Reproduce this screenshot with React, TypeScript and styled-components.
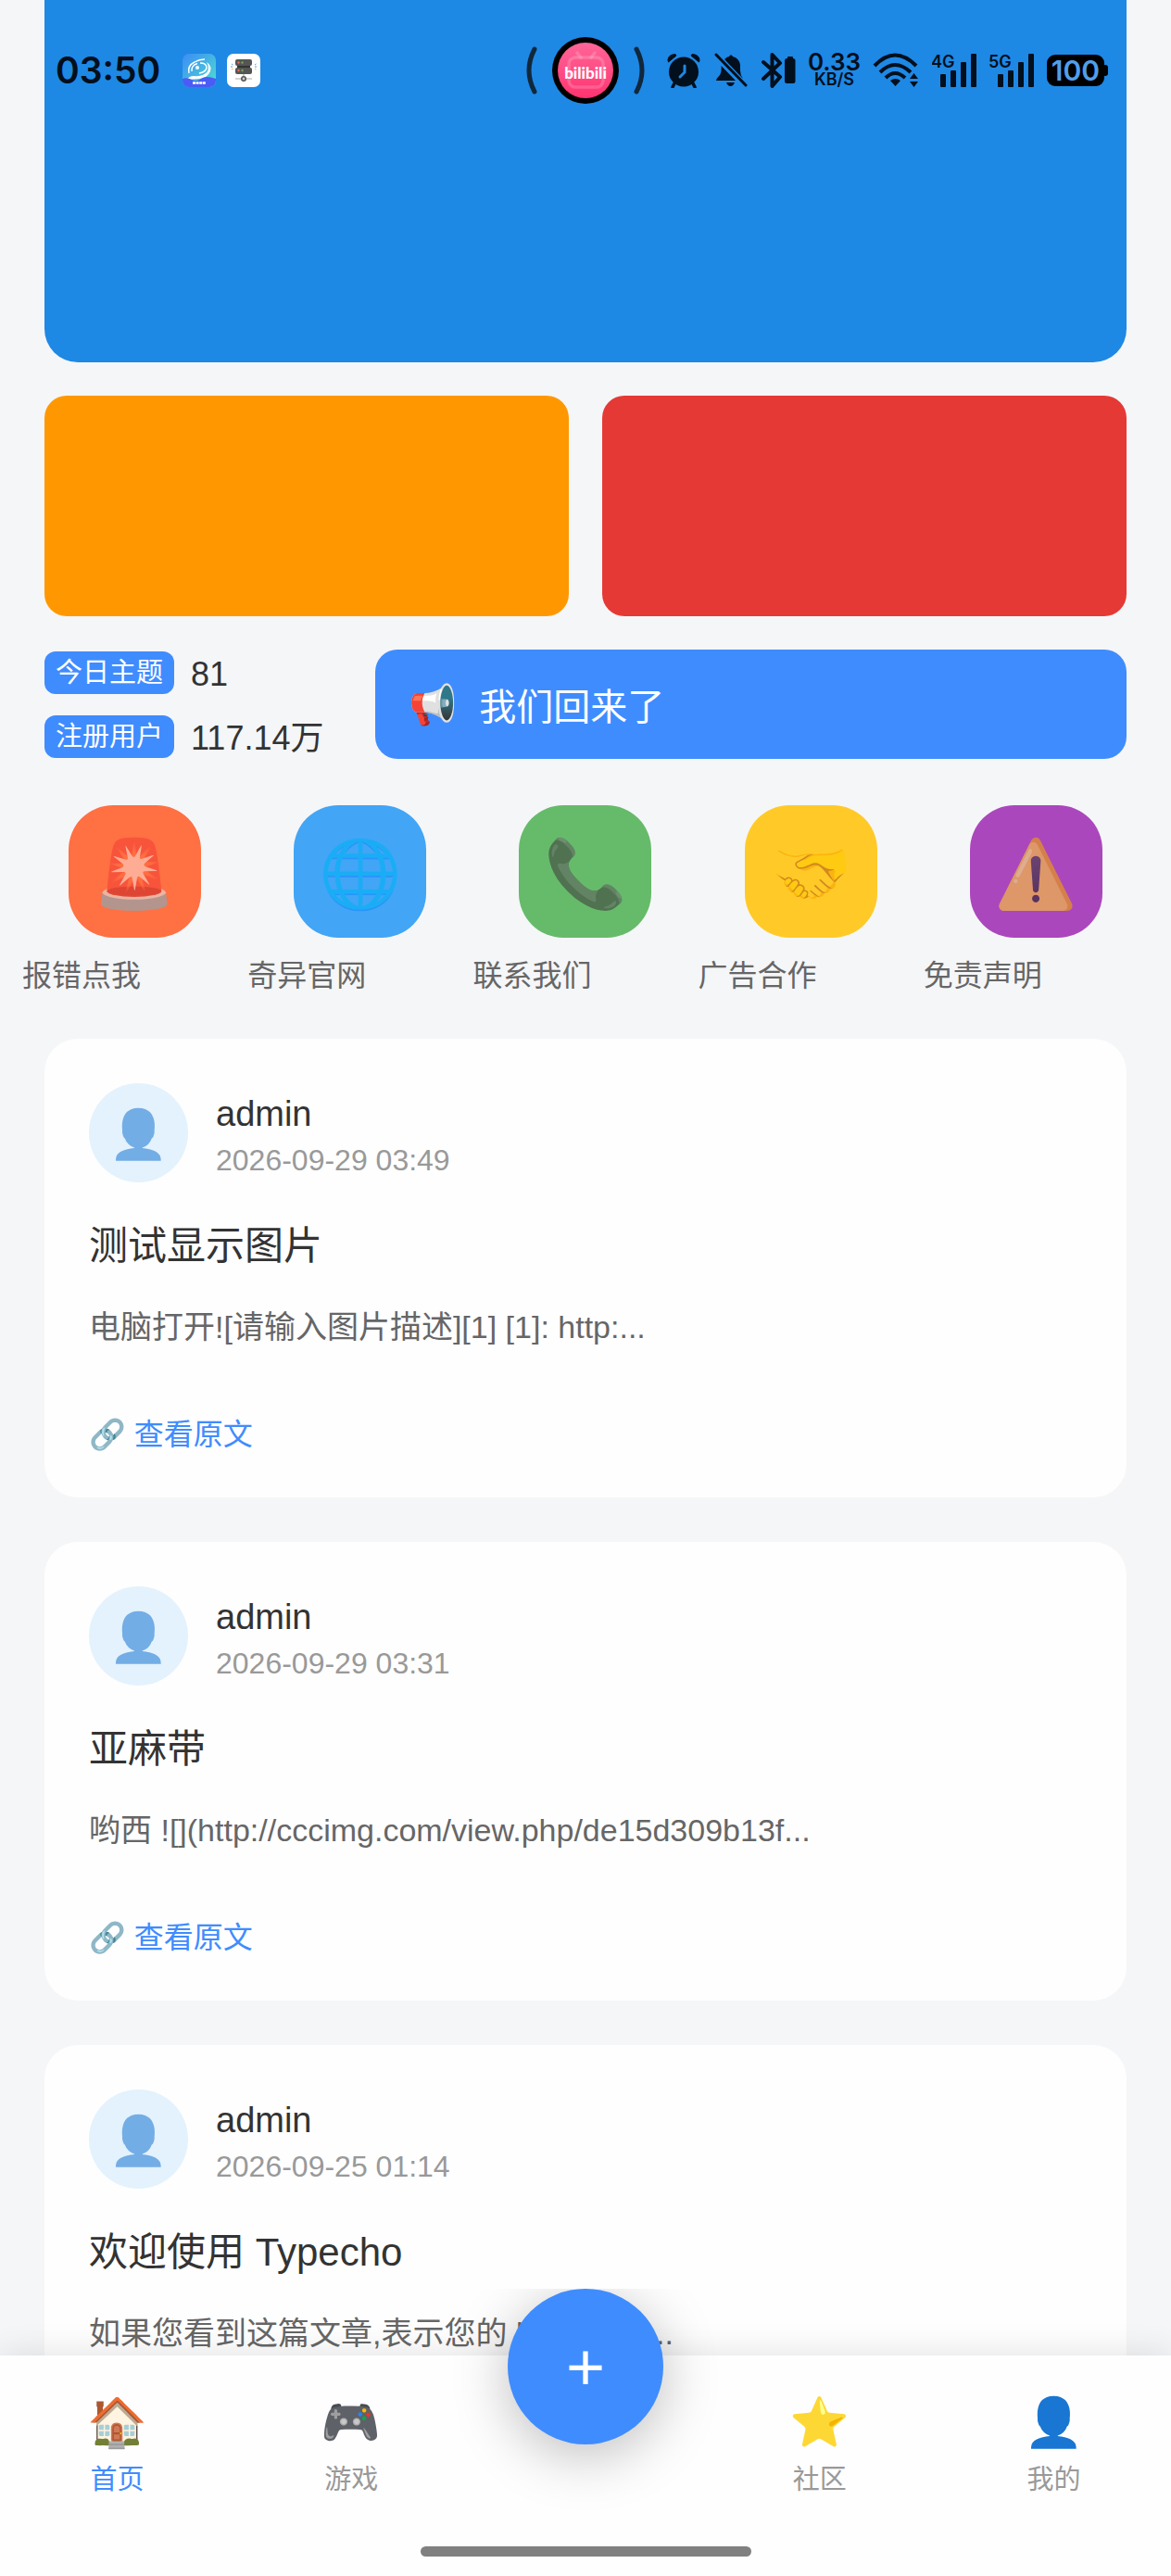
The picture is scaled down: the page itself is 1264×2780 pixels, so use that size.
import React from "react";
import styled, { createGlobalStyle } from "styled-components";

const ink = "#020f1c";
const primary = "#3f8cff";

const GlobalStyle = createGlobalStyle`
  * { box-sizing: border-box; }
  body {
    margin: 0;
    background: #f5f6f8;
    color: #333;
    font-family: "Liberation Sans", "Noto Sans CJK SC", "Noto Color Emoji", sans-serif;
  }
  h2, p { margin: 0; font-weight: 400; }
  a { color: inherit; text-decoration: none; }
  button { font: inherit; border: 0; padding: 0; cursor: pointer; }
`;

const Screen = styled.div`
  position: relative;
  display: flex;
  flex-direction: column;
  height: 100vh;
  overflow: hidden;
`;

/* ---------- system status bar ---------- */

const StatusBar = styled.header`
  position: absolute;
  inset: 0 0 auto 0;
  z-index: 2;
  display: grid;
  grid-template-columns: 1fr auto 1fr;
  align-items: center;
  height: 152px;
  padding: 0 60px;
  color: ${ink};
  font-family: Inter, "Liberation Sans", sans-serif;
  font-weight: 600;
`;

const StatusLeft = styled.div`
  display: flex;
  align-items: center;
  gap: 12px;
`;

const Clock = styled.time`
  margin-right: 12px;
  font-size: 39px;
  line-height: 48px;
`;

const Island = styled.div`
  display: flex;
  align-items: center;
  gap: 16px;
`;

const StatusRight = styled.div`
  display: flex;
  align-items: center;
  justify-content: flex-end;
  gap: 14px;
  padding-right: 8px;
`;

const NetSpeed = styled.div`
  display: flex;
  flex-direction: column;
  align-items: center;
  width: 55px;
  font-size: 26px;
  line-height: 20px;
`;

const SpeedUnit = styled.span`
  font-size: 18px;
  line-height: 18px;
`;

/* ---------- feed ---------- */

const Feed = styled.main`
  flex: 1;
  min-height: 0;
  overflow-y: auto;
  scrollbar-width: none;
`;

const Section = styled.section`
  padding: 0 48px;
`;

const Hero = styled.div`
  height: 391px;
  border-radius: 0 0 36px 36px;
  background: #1e88e5;
`;

const Promos = styled.div`
  display: grid;
  grid-template-columns: 1fr 1fr;
  gap: 36px;
  margin-top: 36px;
`;

const Promo = styled.div<{ $color: string }>`
  height: 238px;
  border-radius: 24px;
  background: ${(p) => p.$color};
`;

const InfoRow = styled.div`
  display: grid;
  grid-template-columns: 321px 1fr;
  gap: 36px;
  align-items: center;
  margin-top: 36px;
`;

const Stats = styled.div`
  display: flex;
  flex-direction: column;
  gap: 23px;
`;

const Stat = styled.div`
  display: flex;
  align-items: center;
  gap: 18px;
  height: 46px;
  white-space: nowrap;
`;

const Badge = styled.span`
  padding: 1px 12px 0;
  border-radius: 12px;
  background: ${primary};
  color: #fff;
  font-size: 29px;
  line-height: 45px;
`;

const StatValue = styled.span`
  padding-top: 4px;
  font-size: 36px;
  line-height: 42px;
`;

const Notice = styled.div`
  display: flex;
  align-items: center;
  gap: 24px;
  height: 118px;
  padding: 0 36px;
  border-radius: 24px;
  background: ${primary};
  color: #fff;
  font-size: 40px;
`;

const NoticeEmoji = styled.span`
  font-size: 42px;
`;

const Shortcuts = styled.nav`
  display: grid;
  grid-template-columns: repeat(5, 1fr);
  margin-top: 50px;
  padding: 0 24px;
`;

const Shortcut = styled.a`
  display: flex;
  flex-direction: column;
  gap: 20px;
  color: #666;
  font-size: 32px;
  line-height: 43px;
`;

const Tile = styled.span<{ $color: string }>`
  display: flex;
  align-items: center;
  justify-content: center;
  align-self: center;
  width: 143px;
  height: 143px;
  border-radius: 48px;
  background: ${(p) => p.$color};
`;

const TileEmoji = styled.span`
  padding-top: 4px;
  font-size: 72px;
  line-height: 84px;
  opacity: 0.6;
`;

const Posts = styled.section`
  display: flex;
  flex-direction: column;
  gap: 48px;
  padding: 46px 48px 48px;
`;

const Card = styled.article`
  padding: 48px;
  border-radius: 36px;
  background: #fefefe;
`;

const Author = styled.div`
  display: flex;
  align-items: center;
  gap: 30px;
`;

const AuthorText = styled.div`
  padding-top: 7px;
`;

const Avatar = styled.div`
  display: flex;
  align-items: center;
  justify-content: center;
  width: 107px;
  height: 107px;
  border-radius: 50%;
  background: #e3f2fd;
`;

const AvatarEmoji = styled.span`
  padding-top: 2px;
  font-size: 52px;
  line-height: 60px;
  opacity: 0.55;
`;

const Name = styled.p`
  font-size: 38px;
  line-height: 52px;
`;

const Posted = styled.time`
  display: block;
  color: #999;
  font-size: 32px;
  line-height: 48px;
`;

const Title = styled.h2`
  margin-top: 39px;
  font-size: 42px;
  line-height: 60px;
`;

const Excerpt = styled.p`
  margin-top: 31px;
  color: #666;
  font-size: 34px;
  line-height: 52px;
`;

const ReadMore = styled.a`
  display: block;
  margin-top: 70px;
  color: ${primary};
  font-size: 32px;
  line-height: 40px;
`;

/* Link emoji is drawn slightly faded next to the label. */
const LinkEmoji = styled.span`
  opacity: 0.9;
`;

/* ---------- bottom bar ---------- */

const TabBar = styled.footer`
  position: relative;
  display: flex;
  flex-direction: column;
  align-items: center;
  justify-content: space-between;
  height: 238px;
  padding: 40px 0 21px;
  background: #fefefe;
  box-shadow: 0 0 36px rgba(0, 0, 0, 0.12);
`;

const Tabs = styled.nav`
  display: grid;
  grid-template-columns: repeat(5, 1fr);
  width: 100%;
`;

const Tab = styled.a<{ $active?: boolean; $column: number }>`
  grid-column: ${(p) => p.$column};
  display: flex;
  flex-direction: column;
  align-items: center;
  gap: 10px;
  color: ${(p) => (p.$active ? primary : "#999")};
  font-size: 29px;
  line-height: 40px;
`;

const TabEmoji = styled.span`
  font-size: 52px;
  line-height: 64px;
`;

/* The shadow is cut off level with the top edge of the button. */
const AddButton = styled.button`
  position: absolute;
  top: -72px;
  left: calc(50% - 84px);
  width: 168px;
  height: 168px;
  border-radius: 50%;
  background: ${primary};
  color: #fff;
  box-shadow: 0 12px 60px rgba(0, 0, 0, 0.25);
  clip-path: inset(0 -100px -100px -100px);

  && {
    font-size: 72px;
    line-height: 168px;
  }
`;

const HomeIndicator = styled.div`
  width: 357px;
  height: 11px;
  border-radius: 6px;
  background: #808080;
`;

/* ---------- status icons ---------- */

const WhaleApp = () => (
  <svg width="36" height="36" viewBox="0 0 36 36">
    <defs>
      <linearGradient id="whale" x1="0" y1="0" x2="1" y2="1">
        <stop offset="0" stopColor="#3b8cf5" />
        <stop offset="1" stopColor="#4fe0d0" />
      </linearGradient>
      <clipPath id="whaleClip"><rect width="36" height="36" rx="7" /></clipPath>
    </defs>
    <g clipPath="url(#whaleClip)">
      <rect width="36" height="36" fill="url(#whale)" />
      <path d="M7 21 Q5 13 13 9 Q18 6 24 6" fill="none" stroke="#fff" strokeWidth="1.4" />
      <path d="M10 19 Q9 13 16 10.5 M19 10 Q26 10 26 15 Q25 20 18 21" fill="none" stroke="#fff" strokeWidth="1.4" />
      <path d="M26 9 Q32 13 30 19 Q27 26 18 27 L5 28 Q7 24 12 24 Q23 25 27 19 Q29 14 26 9Z" fill="#fff" />
      <circle cx="16" cy="15" r="2" fill="#fff" />
      <path d="M0 27 Q5 25 10 28 T20 27 T36 27 V36 H0Z" fill="#4a5cf5" />
      <path d="M11 31.5h14" stroke="#fff" strokeWidth="2.5" strokeDasharray="3 .6" />
    </g>
  </svg>
);

const ServerApp = () => (
  <svg width="36" height="36" viewBox="0 0 36 36">
    <rect width="36" height="36" rx="7" fill="#fff" />
    <path d="M18 20v5M9 27h18" stroke="#aaa" strokeWidth="1.2" />
    <rect x="9" y="6" width="18" height="7" rx="2" fill="#555" />
    <rect x="9" y="15" width="18" height="7" rx="2" fill="#555" />
    <path d="M11 13h14v2H11z" fill="#333" />
    <circle cx="12.5" cy="9.5" r="1.2" fill="#e66b55" />
    <circle cx="16.5" cy="9.5" r="1.2" fill="#69b04b" />
    <circle cx="12.5" cy="18" r="1.2" fill="#e66b55" />
    <circle cx="16.5" cy="18" r="1.2" fill="#69b04b" />
    <circle cx="18" cy="27" r="2.2" fill="#ccc" stroke="#555" strokeWidth="1.6" />
    <path d="M5 11l1.5 1M4 14h2M30 12l1.5-1M30 14h2" stroke="#5b9bd5" />
    <path d="M5 17l1.5-1M30 16l1.5 1" stroke="#e0b848" />
  </svg>
);

const Bracket = ({ flip }: { flip?: boolean }) => (
  <svg width="12" height="52" viewBox="0 0 12 52">
    <path
      d={flip ? "M3 3 Q15 26 3 49" : "M9 3 Q-3 26 9 49"}
      fill="none"
      stroke="#10283b"
      strokeWidth="5"
      strokeLinecap="round"
    />
  </svg>
);

const BiliBadge = () => (
  <svg width="72" height="72" viewBox="0 0 72 72">
    <defs>
      <linearGradient id="bili" x1="0" y1="0" x2="0" y2="1">
        <stop offset="0" stopColor="#ff6699" />
        <stop offset="1" stopColor="#ff3370" />
      </linearGradient>
    </defs>
    <circle cx="36" cy="36" r="36" fill="#000" />
    <circle cx="36" cy="36" r="30" fill="url(#bili)" />
    <g fill="none" stroke="#fff" strokeOpacity=".18" strokeWidth="3.5" strokeLinecap="round">
      <rect x="18" y="22" width="37" height="32" rx="7" />
      <path d="M27 17l4 5M46 17l-4 5" />
    </g>
    <text
      x="36"
      y="45"
      textAnchor="middle"
      fill="#fff"
      fontFamily="Lato, sans-serif"
      fontWeight="900"
      fontSize="17"
    >
      bilibili
    </text>
  </svg>
);

const AlarmIcon = () => (
  <svg width="38" height="38" viewBox="0 0 38 38" fill={ink} stroke={ink}>
    <circle cx="19" cy="20.5" r="16" stroke="none" />
    <path d="M2 8 Q2 2 10 1.5 L11 3 L2.5 10Z M36 8 Q36 2 28 1.5 L27 3 L35.5 10Z" strokeLinejoin="round" />
    <path d="M9 33l-2 4M29 33l2 4" strokeWidth="3.5" strokeLinecap="round" />
    <path d="M20 14v7l-5 5" fill="none" stroke="#1e88e5" strokeWidth="3" strokeLinecap="round" />
  </svg>
);

const BellOffIcon = () => (
  <svg width="36" height="38" viewBox="0 0 36 38" fill={ink}>
    <path d="M11 7 Q14 4 16 4 Q18 .5 20 4 Q27 6 28 13 V19 Q28 24 31 28 Z" />
    <path d="M7.5 14 L23 30 H2 Q2 28 6 24 Q8 21 7.5 14Z" />
    <path d="M13 32h9q-1.5 4-4.5 4t-4.5-4z" />
    <path d="M2 2 L34 35" stroke={ink} strokeWidth="3" strokeLinecap="round" />
  </svg>
);

const BluetoothIcon = () => (
  <svg width="38" height="38" viewBox="0 0 38 38">
    <path
      d="M3 10l18 16-8.500 10V2L21 11 3 28"
      fill="none"
      stroke={ink}
      strokeWidth="4"
      strokeLinejoin="round"
      strokeLinecap="round"
    />
    <rect x="26" y="6" width="11.5" height="27" rx="2.5" fill={ink} />
    <rect x="29" y="4" width="6" height="4" rx="1" fill={ink} />
  </svg>
);

const WifiIcon = () => (
  <svg width="50" height="38" viewBox="0 0 50 38" fill="none" stroke={ink} strokeWidth="4">
    <path d="M2 14 Q24 -9 47 14" />
    <path d="M8 21 Q24 5 41 21" />
    <path d="M14 27 Q24 17 35 27" />
    <path d="M19 30 Q24.5 26 30 30 L24.5 36Z" fill={ink} stroke="none" />
    <path d="M40 28l4.5-6 4.5 6zM40 31l4.5 6 4.5-6z" fill={ink} stroke="none" />
  </svg>
);

const SignalIcon = ({ label }: { label: string }) => (
  <svg width="48" height="38" viewBox="0 0 48 38" fill={ink}>
    <text x="-1" y="16" fontFamily="Inter, sans-serif" fontWeight="600" fontSize="18">{label}</text>
    <rect x="9" y="23" width="6" height="14" rx="1" />
    <rect x="20" y="19" width="6" height="18" rx="1" />
    <rect x="31" y="10" width="6" height="27" rx="1" />
    <rect x="42" y="1" width="6" height="36" rx="1" />
  </svg>
);

const BatteryIcon = () => (
  <svg width="66" height="36" viewBox="0 0 66 36">
    <rect y="1" width="62" height="34" rx="9" fill="#000" />
    <rect x="60" y="12" width="6" height="12" rx="3" fill="#000" />
    <text
      x="31"
      y="29"
      textAnchor="middle"
      fill="#4f9fea"
      fontFamily="Inter, sans-serif"
      fontWeight="600"
      fontSize="30"
    >
      100
    </text>
  </svg>
);

/* ---------- data ---------- */

const stats = [
  { label: "今日主题", value: "81" },
  { label: "注册用户", value: "117.14万" },
];

const shortcuts = [
  { label: "报错点我", emoji: "🚨", color: "#ff7043" },
  { label: "奇异官网", emoji: "🌐", color: "#42a5f5" },
  { label: "联系我们", emoji: "📞", color: "#66bb6a" },
  { label: "广告合作", emoji: "🤝", color: "#ffca28" },
  { label: "免责声明", emoji: "⚠️", color: "#ab47bc" },
];

const posts = [
  { date: "2026-09-29 03:49", title: "测试显示图片", text: "电脑打开![请输入图片描述][1] [1]: http:...", link: "#" },
  { date: "2026-09-29 03:31", title: "亚麻带", text: "哟西 ![](http://cccimg.com/view.php/de15d309b13f...", link: "#" },
  { date: "2026-09-25 01:14", title: "欢迎使用 Typecho", text: "如果您看到这篇文章,表示您的 blog 已经..." },
];

const tabs = [
  { label: "首页", emoji: "🏠", column: 1 },
  { label: "游戏", emoji: "🎮", column: 2 },
  { label: "社区", emoji: "⭐", column: 4 },
  { label: "我的", emoji: "👤", column: 5 },
];

export default function App() {
  return (
    <Screen>
      <GlobalStyle />
      <StatusBar>
        <StatusLeft>
          <Clock>03:50</Clock>
          <WhaleApp />
          <ServerApp />
        </StatusLeft>
        <Island>
          <Bracket />
          <BiliBadge />
          <Bracket flip />
        </Island>
        <StatusRight>
          <AlarmIcon />
          <BellOffIcon />
          <BluetoothIcon />
          <NetSpeed>
            0.33
            <SpeedUnit>KB/S</SpeedUnit>
          </NetSpeed>
          <WifiIcon />
          <SignalIcon label="4G" />
          <SignalIcon label="5G" />
          <BatteryIcon />
        </StatusRight>
      </StatusBar>

      <Feed>
        <Section>
          <Hero />
          <Promos>
            <Promo $color="#ff9800" />
            <Promo $color="#e53935" />
          </Promos>
          <InfoRow>
            <Stats>
              {stats.map((s) => (
                <Stat key={s.label}>
                  <Badge>{s.label}</Badge>
                  <StatValue>{s.value}</StatValue>
                </Stat>
              ))}
            </Stats>
            <Notice>
              <NoticeEmoji>📢</NoticeEmoji>
              <span>我们回来了</span>
            </Notice>
          </InfoRow>
        </Section>

        <Shortcuts>
          {shortcuts.map((s) => (
            <Shortcut key={s.label} href="#">
              <Tile $color={s.color}>
                <TileEmoji>{s.emoji}</TileEmoji>
              </Tile>
              <span>{s.label}</span>
            </Shortcut>
          ))}
        </Shortcuts>

        <Posts>
          {posts.map((p) => (
            <Card key={p.date}>
              <Author>
                <Avatar>
                  <AvatarEmoji>👤</AvatarEmoji>
                </Avatar>
                <AuthorText>
                  <Name>admin</Name>
                  <Posted>{p.date}</Posted>
                </AuthorText>
              </Author>
              <Title>{p.title}</Title>
              <Excerpt>{p.text}</Excerpt>
              {p.link && (
                <ReadMore href={p.link}>
                  <LinkEmoji>🔗</LinkEmoji> 查看原文
                </ReadMore>
              )}
            </Card>
          ))}
        </Posts>
      </Feed>

      <TabBar>
        <Tabs>
          {tabs.map((t) => (
            <Tab key={t.label} href="#" $column={t.column} $active={t.column === 1}>
              <TabEmoji>{t.emoji}</TabEmoji>
              <span>{t.label}</span>
            </Tab>
          ))}
        </Tabs>
        <AddButton type="button">+</AddButton>
        <HomeIndicator />
      </TabBar>
    </Screen>
  );
}
